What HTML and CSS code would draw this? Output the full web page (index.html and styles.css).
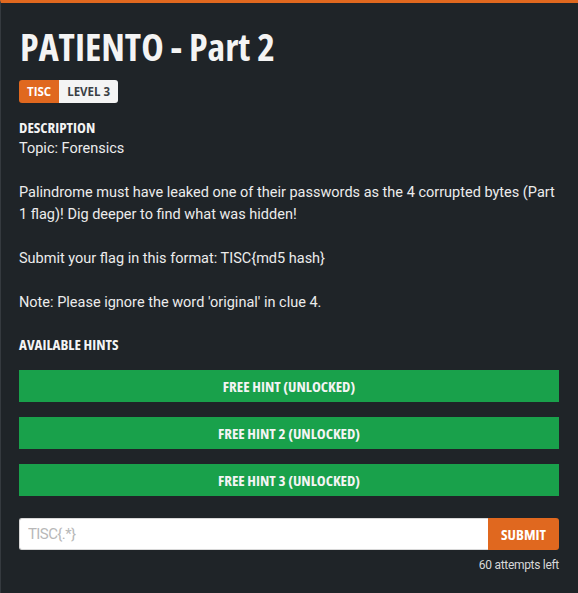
FILE: index.html
```html
<!DOCTYPE html>
<html>
<head>
<meta charset="utf-8">
<link rel="stylesheet" href="styles.css">
</head>
<body>
<div class="modal">
  <h1 class="title">PATIENTO - Part 2</h1>
  <div class="badges"><span class="badge badge-cat">TISC</span><span class="badge badge-level">LEVEL 3</span></div>
  <h2 class="section">DESCRIPTION</h2>
  <div class="desc">
    <p>Topic: Forensics</p>
    <p>Palindrome must have leaked one of their passwords as the 4 corrupted bytes (Part 1 flag)! Dig deeper to find what was hidden!</p>
    <p>Submit your flag in this format: TISC{md5 hash}</p>
    <p>Note: Please ignore the word 'original' in clue 4.</p>
  </div>
  <h2 class="section hints-title">AVAILABLE HINTS</h2>
  <div class="hints">
    <button class="hint">FREE HINT (UNLOCKED)</button>
    <button class="hint">FREE HINT 2 (UNLOCKED)</button>
    <button class="hint">FREE HINT 3 (UNLOCKED)</button>
  </div>
  <div class="submit-row">
    <input class="flag-input" type="text" placeholder="TISC{.*}">
    <button class="submit">SUBMIT</button>
  </div>
  <div class="attempts">60 attempts left</div>
</div>
</body>
</html>
```
FILE: styles.css
```css
html, body {
  margin: 0;
  padding: 0;
  background: #1f2428;
}
.modal {
  box-sizing: border-box;
  width: 578px;
  height: 593px;
  background: #1f2428;
  border-top: 3px solid #e0681f;
  border-left: 1px solid #353a3f;
  padding: 21px 19px 0 18px;
  font-family: Roboto, "Liberation Sans", sans-serif;
  color: #e8e8e8;
}
.title,
.badge,
.section,
.hint,
.submit {
  font-family: "Open Sans", Roboto, sans-serif;
  font-stretch: 75%;
  font-weight: 700;
}
.title {
  margin: 0 0 0 1px;
  font-size: 38px;
  font-stretch: 87.5%;
  line-height: 44px;
  color: #f4f4f4;
}
.badges {
  display: flex;
  margin-top: 12px;
}
.badge {
  font-size: 11.5px;
  font-stretch: 92%;
  line-height: 23px;
  height: 23px;
  padding: 0 8px;
}
.badge-cat {
  background: #e0681f;
  color: #fff;
  border-radius: 3px 0 0 3px;
}
.badge-level {
  background: #f4f4f4;
  color: #3b3f44;
  border-radius: 0 3px 3px 0;
}
.section {
  margin: 0;
  font-size: 15px;
  font-stretch: 75%;
  line-height: 18px;
  color: #f4f4f4;
}
.badges + .section {
  margin-top: 15px;
}
.desc {
  margin-top: 2px;
}
.desc p {
  margin: 0 0 22px 0;
  font-size: 14.5px;
  line-height: 22px;
  color: #ececec;
}
.desc p:last-child {
  margin-bottom: 21px;
}
.hints {
  display: flex;
  flex-direction: column;
  gap: 15px;
  margin-top: 17px;
}
.hint {
  height: 32px;
  border: none;
  background: #19a14b;
  color: #f4f4f4;
  font-size: 15px;
  font-stretch: 75%;
  padding: 0;
  width: 100%;
}
.submit-row {
  display: flex;
  margin-top: 22px;
  height: 32px;
}
.flag-input {
  flex: 1;
  box-sizing: border-box;
  height: 32px;
  border: 1px solid #d8d8d8;
  border-right: none;
  border-radius: 3px 0 0 3px;
  padding: 0 8px;
  font-family: Roboto, sans-serif;
  font-size: 15px;
  letter-spacing: -0.6px;
  color: #333;
  outline: none;
}
.flag-input::placeholder {
  color: #b8b8b8;
}
.submit {
  width: 71px;
  border: none;
  background: #e0681f;
  color: #fff;
  border-radius: 0 3px 3px 0;
  font-size: 15px;
  padding: 0;
}
.attempts {
  text-align: right;
  font-size: 12px;
  letter-spacing: -0.3px;
  line-height: 16px;
  margin-top: 7px;
  color: #d8d8d8;
}
```
